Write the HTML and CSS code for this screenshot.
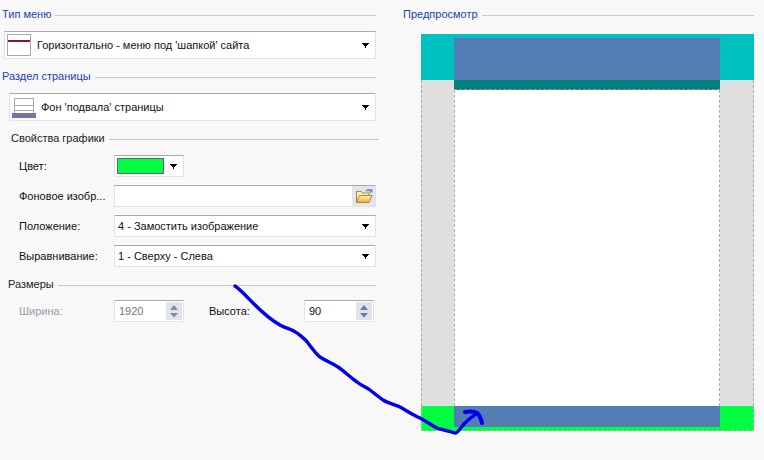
FILE: index.html
```html
<!DOCTYPE html>
<html lang="ru">
<head>
<meta charset="utf-8">
<title>Настройки меню</title>
<link rel="stylesheet" href="styles.css">
</head>
<body>
<svg width="0" height="0" class="defs">
  <defs><linearGradient id="fold" x1="0" y1="0" x2="0" y2="1"><stop offset="0" stop-color="#fff0b0"/><stop offset="1" stop-color="#f0b030"/></linearGradient></defs>
  <symbol id="arrow" viewBox="0 0 7 5"><path d="M0 0h7v1H6v1H5v1H4v2H3V3H2V2H1V1H0z" fill="#000"/></symbol>
  <symbol id="spin" viewBox="0 0 16 18"><path d="M8 3l4 5H4zM4 11h8l-4 4.500z" fill="currentColor"/></symbol>
</svg>
<main class="app">
  <section class="left">
    <h2 class="title blue t1"><span>Тип меню</span></h2>
    <div class="combo c1">
      <svg class="ico" width="24" height="22" viewBox="0 0 24 22"><rect x=".5" y=".5" width="23" height="21" fill="#fff" stroke="#aaa"/><rect x="1" y="6" width="22" height="2" fill="#8f1238"/></svg>
      <span class="val">Горизонтально - меню под 'шапкой' сайта</span>
      <svg class="arr"><use href="#arrow"/></svg>
    </div>
    <h2 class="title blue t2"><span>Раздел страницы</span></h2>
    <div class="combo c2">
      <svg class="ico" width="24" height="22" viewBox="0 0 24 22"><rect x="2.500" y="2.500" width="19" height="15" fill="#fff" stroke="#aaa"/><path d="M3 9.500h18M3 14.500h18" stroke="#aaa"/><rect x="0" y="17" width="24" height="5" fill="#7575a3"/></svg>
      <span class="val">Фон 'подвала' страницы</span>
      <svg class="arr"><use href="#arrow"/></svg>
    </div>
    <h2 class="title t3"><span>Свойства графики</span></h2>
    <div class="form">
      <label class="lbl">Цвет:</label>
      <div class="field color"><i class="swatch"></i><svg class="arr"><use href="#arrow"/></svg></div>
      <label class="lbl">Фоновое изобр...</label>
      <div class="field file">
        <span class="browse">
          <svg width="20" height="18" viewBox="0 0 20 18"><path d="M2.500 15V4.500h5l1 1.500h6.500V8" fill="#f9ecc0" stroke="#a8893f"/><path d="M2.500 15.500L5.500 8.500h12.500l-3 7z" fill="url(#fold)" stroke="#a8893f"/><path d="M11 4q3-3 6-1.500l1.500-1v4h-4l1.500-1q-2-1-4 0" fill="#6c8fb8"/></svg>
        </span>
      </div>
      <label class="lbl">Положение:</label>
      <div class="field"><span class="val">4 - Замостить изображение</span><svg class="arr"><use href="#arrow"/></svg></div>
      <label class="lbl">Выравнивание:</label>
      <div class="field"><span class="val">1 - Сверху - Слева</span><svg class="arr"><use href="#arrow"/></svg></div>
    </div>
    <h2 class="title t4"><span>Размеры</span></h2>
    <div class="sizes">
      <label class="lbl off">Ширина:</label>
      <div class="field spinner off"><span class="val">1920</span><span class="spin"><svg width="16" height="18"><use href="#spin"/></svg></span></div>
      <label class="lbl second">Высота:</label>
      <div class="field spinner"><span class="val">90</span><span class="spin"><svg width="16" height="18"><use href="#spin"/></svg></span></div>
    </div>
  </section>
  <section class="right">
    <h2 class="title blue"><span>Предпросмотр</span></h2>
    <div class="preview">
      <div class="head"><div class="head-in"></div></div>
      <div class="side side-l"></div>
      <div class="page"><div class="strip"></div></div>
      <div class="side side-r"></div>
      <div class="foot"><div class="foot-in"></div></div>
    </div>
  </section>
</main>
<svg class="scribble" width="764" height="460" viewBox="0 0 764 460">
  <path d="M235 286C241 290 247 297 253 303C262 312 271 320 280 325C287 329 292 329 297 333C302 337 305 339 308 343C312 348 315 353 320 357C326 361 332 363 338 367C344 371 350 377 357 382C362 386 366 387 370 390C375 394 379 397 383 400C388 403 395 405 400 407C407 411 413 415 420 418C426 421 431 425 437 428C443 430 449 431 455 433C458 433 460 428 465 423C469 419 472 417 476 414" fill="none" stroke="#0000f0" stroke-width="3.400" stroke-linecap="round" stroke-linejoin="round"/>
  <path d="M465 412C470 411 474 411 477 413C480 415 481 419 482 423" fill="none" stroke="#0000f0" stroke-width="4" stroke-linecap="round"/>
</svg>
</body>
</html>
```
FILE: styles.css
```css
html, body { margin: 0; padding: 0; }
body {
  width: 764px;
  height: 460px;
  overflow: hidden;
  position: relative;
  background: #f8f8f8;
  color: #111;
  font: 11px/14px "Liberation Sans", Arial, sans-serif;
}
.defs { position: absolute; }
.app { display: flex; padding-top: 8px; }
.left { width: 376px; flex: none; }
.right { width: 351px; margin-left: 27px; flex: none; }

.title {
  display: flex;
  align-items: center;
  gap: 4px;
  height: 14px;
  margin: 0;
  font: inherit;
  color: #222;
}
.title span { padding-bottom: 2px; }
.title::after { content: ""; flex: 1; height: 1px; background: #c8c8cc; margin-top: 1px; }
.title.blue { color: #1c3fb4; }
.t1 { margin-left: 2px; }
.t2 { margin: 11px 0 0 2px; }
.t3 { margin: 11px -3px 0 11px; }
.t4 { margin: 11px 0 0 8px; }

.combo, .field {
  display: flex;
  align-items: center;
  box-sizing: border-box;
  background: #fff;
  border: 1px solid #e1e2ea;
  border-top-color: #a9a9a9;
}
.combo { height: 28px; margin-top: 9px; padding-left: 2px; }
.c1 { margin-left: 4px; }
.c2 { margin-left: 9px; }
.ico { flex: none; margin-right: 6px; }
.c2 .ico { margin-right: 5px; }
.val { flex: 1; color: #111; }
.arr { flex: none; width: 7px; height: 5px; margin-right: 6px; }

.form {
  display: grid;
  grid-template-columns: 95px 262px;
  grid-auto-rows: 22px;
  row-gap: 8px;
  margin: 9px 0 0 19px;
  align-items: center;
}
.form .field { height: 22px; padding-left: 3px; }
.form .color { width: 70px; padding-left: 2px; }
.swatch {
  width: 47px;
  height: 16px;
  box-sizing: border-box;
  flex: none;
  border: 1px solid #666;
  background: #00ff40;
  margin-right: 6px;
}
.form .file { justify-content: flex-end; padding-left: 0; }
.browse {
  width: 23px;
  height: 20px;
  background: #e4e6ec;
  display: flex;
  align-items: center;
  justify-content: center;
}
.sizes {
  display: flex;
  align-items: center;
  margin: 8px 0 0 19px;
}
.sizes .lbl { width: 95px; flex: none; }
.sizes .second { margin-left: 25px; }
.lbl.off { color: #9a9aa8; }
.spinner { width: 70px; height: 22px; padding-left: 4px; flex: none; }
.spinner.off .val { color: #777; }
.spin {
  width: 16px;
  height: 18px;
  margin-right: 1px;
  background: #dfe3ec;
  color: #6f7ba6;
  display: block;
}
.spin svg { display: block; }
.spinner.off .spin { color: #8d8d8d; }

.preview {
  display: grid;
  grid-template-columns: 33px 266px 34px;
  grid-template-rows: 46px 326px 25px;
  margin: 12px 0 0 18px;
  width: 333px;
}
.head {
  grid-column: 1 / -1;
  background: #00c0c0;
  box-sizing: border-box;
  padding-top: 4px;
}
.head-in { width: 266px; height: 42px; margin-left: 33px; background: #557db5; }
.side { background: #dfdfdf; box-sizing: border-box; }
.side-l { border-left: 1px dashed #aaa; }
.side-r { border-right: 1px dashed #aaa; }
.page { background: #fff; border: 1px dashed #aaa; border-width: 0 1px; box-sizing: border-box; }
.strip { height: 10px; margin: 0 -1px; background: #008080; border-bottom: 1px dashed #999; box-sizing: border-box; }
.foot {
  grid-column: 1 / -1;
  background: #00ff40;
  box-sizing: border-box;
  border: 1px dashed #9fc09f;
  border-top: 0;
}
.foot-in { width: 266px; height: 21px; margin-left: 32px; background: #557db5; }

.scribble { position: absolute; left: 0; top: 0; pointer-events: none; }
```
